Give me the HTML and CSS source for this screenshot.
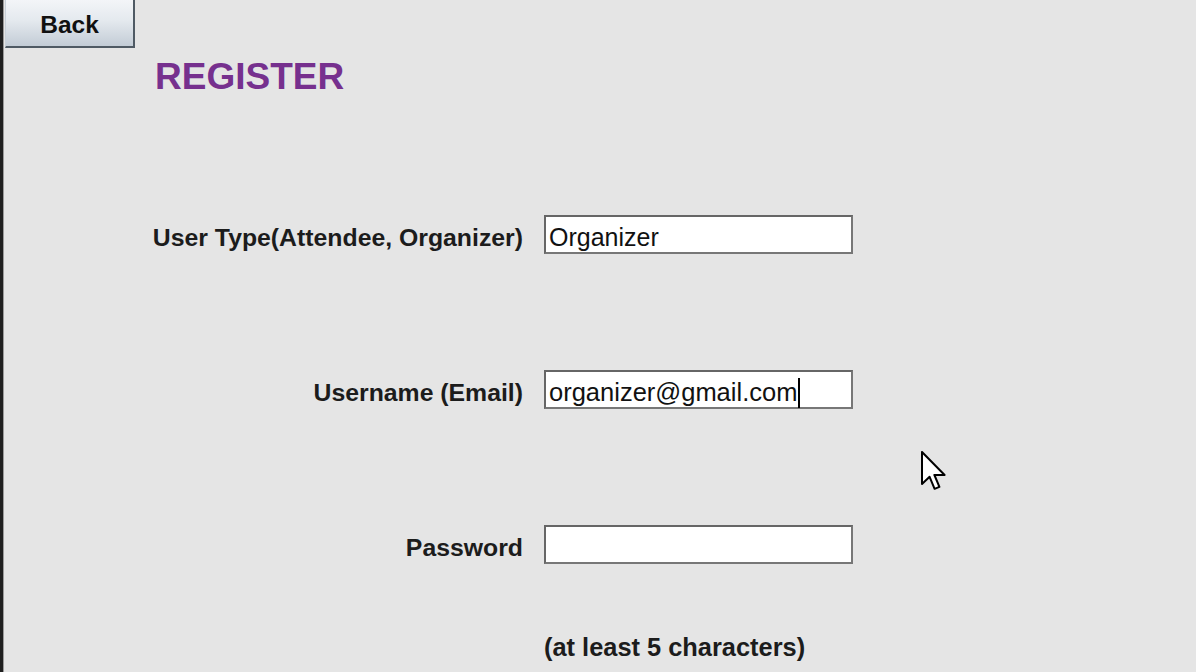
FILE: index.html
```html
<!DOCTYPE html>
<html>
<head>
<meta charset="utf-8">
<link rel="stylesheet" href="styles.css">
</head>
<body>
<div class="frame">
  <div class="edge"></div>
  <main class="panel">
    <button class="back">Back</button>
    <h1 class="title">REGISTER</h1>
    <div class="form">
      <label class="label">User Type(Attendee, Organizer)</label>
      <div class="field">Organizer</div>
      <label class="label">Username (Email)</label>
      <div class="field field-email">organizer@gmail.com<span class="caret"></span></div>
      <label class="label">Password</label>
      <div class="field"></div>
    </div>
    <p class="hint">(at least 5 characters)</p>
  </main>
</div>
<svg class="pointer" width="26" height="40" viewBox="0 0 13 20" aria-hidden="true">
  <path d="M0.5 0.5 L0.5 16.5 L4.3 12.9 L6.8 18.9 L9.2 17.9 L6.7 12 L11.8 12 Z" fill="#fff" stroke="#000" stroke-width="1" stroke-linejoin="round"/>
</svg>
</body>
</html>
```

FILE: styles.css
```css
html, body {
  margin: 0;
  padding: 0;
  width: 1196px;
  height: 672px;
  overflow: hidden;
  background: #e5e5e5;
  font-family: "Liberation Sans", Arial, sans-serif;
}

.frame {
  display: flex;
  height: 672px;
}

.edge {
  width: 3px;
  flex: none;
  background: #1f1f1f;
  border-right: 1px solid #9a9a9a;
}

.panel {
  flex: 1;
  display: flex;
  flex-direction: column;
  align-items: flex-start;
}

.back {
  margin: 0 0 0 1px;
  width: 130px;
  height: 48px;
  padding: 3px 0 0;
  border: 2px solid #4f5a64;
  border-top: none;
  border-left: 1px solid #c8d0d8;
  background: linear-gradient(#f3f5f8 0%, #e4e9ee 45%, #c3ccd6 100%);
  font-family: "Liberation Sans", Arial, sans-serif;
  font-weight: bold;
  font-size: 24.5px;
  color: #111;
  box-sizing: border-box;
}

.title {
  margin: 10px 0 0 151px;
  font-size: 37px;
  line-height: 37px;
  font-weight: bold;
  color: #76308e;
}

.form {
  margin: 120px 0 0 151px;
  display: grid;
  grid-template-columns: 368px 309px;
  column-gap: 21px;
  row-gap: 116px;
  align-items: center;
}

.label {
  justify-self: end;
  white-space: nowrap;
  font-weight: bold;
  font-size: 24.8px;
  padding-top: 6px;
  color: #1c1c1c;
}

.field {
  height: 39px;
  box-sizing: border-box;
  border: 2px solid #666;
  border-right-color: #777;
  border-bottom-color: #777;
  background: #fff;
  padding: 5px 3px 0;
  font-size: 25px;
  line-height: 30px;
  color: #111;
  white-space: nowrap;
}

.field-email {
  font-size: 25.5px;
}

.caret {
  display: inline-block;
  width: 2px;
  height: 30px;
  background: #000;
  vertical-align: -7px;
  margin-left: 1px;
}

.hint {
  margin: 68px 0 0 540px;
  font-weight: bold;
  font-size: 25.4px;
  line-height: 30px;
  color: #1c1c1c;
}

.pointer {
  position: absolute;
  left: 921px;
  top: 451px;
}
```
